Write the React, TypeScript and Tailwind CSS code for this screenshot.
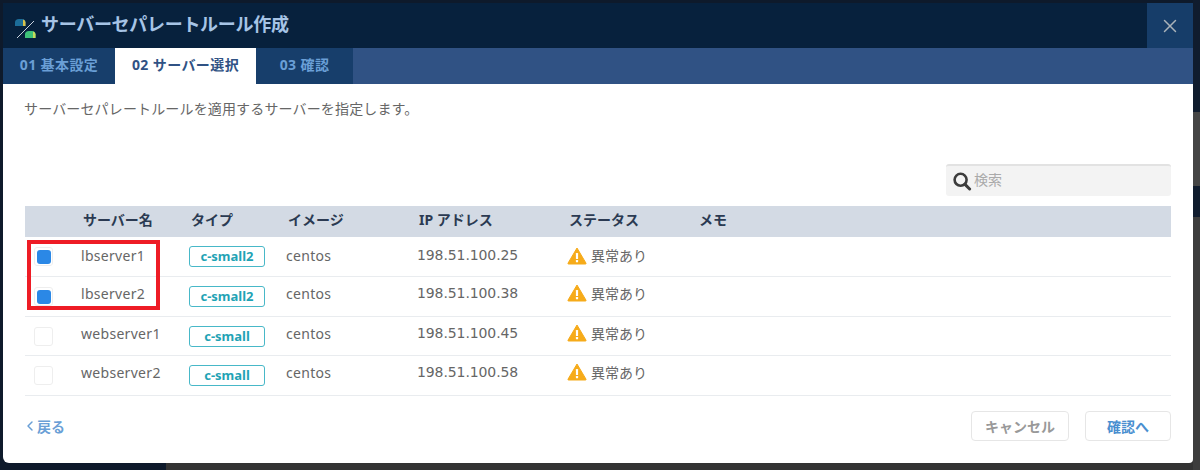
import React from 'react';
import { X, ChevronLeft } from 'lucide-react';

const FONT = 'font-["Noto_Sans","Noto_Sans_CJK_JP",sans-serif]';

interface Server {
  name: string;
  type: string;
  image: string;
  ip: string;
  checked: boolean;
  rowHeight: string;
  textOffset: string;
}

const servers: Server[] = [
  { name: 'lbserver1', type: 'c-small2', image: 'centos', ip: '198.51.100.25', checked: true, rowHeight: 'h-[40px]', textOffset: '-mt-[2px]' },
  { name: 'lbserver2', type: 'c-small2', image: 'centos', ip: '198.51.100.38', checked: true, rowHeight: 'h-[40px]', textOffset: '-mt-[7px]' },
  { name: 'webserver1', type: 'c-small', image: 'centos', ip: '198.51.100.45', checked: false, rowHeight: 'h-[39px]', textOffset: '-mt-[6px]' },
  { name: 'webserver2', type: 'c-small', image: 'centos', ip: '198.51.100.58', checked: false, rowHeight: 'h-[40px]', textOffset: '-mt-[7px]' },
];

const COLS = 'grid grid-cols-[56px_108px_97px_131px_150px_132px_1fr] items-center';

function SeparateIcon() {
  return (
    <svg width="24" height="24" viewBox="0 0 24 24" className="shrink-0">
      <path d="M2 12 V8.5 Q2 5 6 5 H9 Q12.5 5 12.5 8.5 V12 Z" fill="#1c6d99" />
      <path d="M10 5.4 Q12.5 6 12.5 8.5 V12 H10 Z" fill="#d9c24a" />
      <path d="M12 25 V20.5 Q12 17 16 17 H19 Q22.5 17 22.5 20.5 V25 Z" fill="#3fc37a" />
      <path d="M20 17.4 Q22.5 18 22.5 20.5 V25 H20 Z" fill="#c6dc5a" />
      <path d="M3 25 L21 7" stroke="#c9d3de" strokeWidth="1" />
    </svg>
  );
}

function WarnIcon() {
  return (
    <svg width="20" height="18" viewBox="0 0 20 18" className="shrink-0">
      <path d="M10 1 L19 16.2 Q19.4 17 18.4 17 H1.6 Q0.6 17 1 16.2 Z" fill="#f6ab1a" stroke="#f6ab1a" strokeLinejoin="round" />
      <rect x="8.9" y="6" width="2.2" height="6" rx="0.6" fill="#fff" />
      <rect x="8.9" y="13" width="2.2" height="2.2" rx="0.5" fill="#fff" />
    </svg>
  );
}

function SearchIcon() {
  return (
    <svg width="20" height="20" viewBox="0 0 20 20" className="shrink-0">
      <circle cx="8.6" cy="8.8" r="6" fill="none" stroke="#3c3c3c" strokeWidth="2.6" />
      <path d="M13 13.4 L17.6 18" stroke="#3c3c3c" strokeWidth="3" strokeLinecap="round" />
    </svg>
  );
}

function Row({ server }: { server: Server }) {
  return (
    <div className={`${COLS} ${server.rowHeight} border-b border-[#e9ecef] text-[14px] text-[#666666]`}>
      <div className="pl-[9px]">
        <div className="flex h-[19px] w-[19px] items-center justify-center rounded-[3px] border border-[#eeeeee] bg-white">
          {server.checked && <div className="h-[14px] w-[14px] rounded-[3px] bg-[#2b88e6]" />}
        </div>
      </div>
      <div className={`${server.textOffset} tracking-[0.3px]`}>{server.name}</div>
      <div>
        <div className="flex h-[21px] w-[76px] items-center justify-center rounded-[3px] border border-[#48b8c8] text-[13px] font-bold leading-none text-[#1fa3b5]">
          {server.type}
        </div>
      </div>
      <div className={`${server.textOffset} tracking-[0.3px]`}>{server.image}</div>
      <div className={`${server.textOffset} font-["DejaVu_Sans",sans-serif] tracking-[-0.1px]`}>{server.ip}</div>
      <div className={`${server.textOffset} flex items-center gap-[4px]`}>
        <WarnIcon />
        <span>異常あり</span>
      </div>
      <div />
    </div>
  );
}

export default function App() {
  return (
    <div className={`relative h-[470px] w-[1200px] overflow-hidden bg-[#333333] ${FONT}`}>
      {/* 背景の画面 */}
      <div className="absolute left-0 top-0 h-full w-[166px] bg-[#0e1a2b]" />
      <div className="absolute left-0 top-0 h-[3px] w-full bg-[#0e1a2b]" />
      <div className="absolute right-0 top-0 flex h-full w-[7px] flex-col">
        <div className="h-[112px] bg-[#101c2e]" />
        <div className="h-[74px] bg-[#454545]" />
        <div className="h-[31px] bg-[#101c2e]" />
        <div className="flex-1 bg-[#3d3d3d]" />
      </div>

      <div className="relative ml-[3px] mt-[3px] flex h-[460px] w-[1190px] flex-col overflow-hidden rounded-br-[4px] rounded-bl-[6px] bg-white">
        <header className="flex h-[45px] items-center justify-between bg-[#07213d]">
          <div className="flex items-center gap-[4px] pl-[10px]">
            <SeparateIcon />
            <h1 className="-mt-[3px] text-[18px] font-bold leading-none tracking-[-0.3px] text-[#a6c4e6]">サーバーセパレートルール作成</h1>
          </div>
          <div className="flex h-[45px] w-[46px] items-center justify-center bg-[#163d69]">
            <X size={22} strokeWidth={1.6} className="text-[#a9b3ba]" />
          </div>
        </header>

        <nav className="flex h-[36px] bg-[#305284] text-[14px] font-bold tracking-[0.4px]">
          <div className="flex w-[112px] items-center justify-center bg-[#173e6b] pb-[3px] text-[#6a9fd6]">01 基本設定</div>
          <div className="flex w-[141px] items-center justify-center bg-white pb-[3px] text-[#305284]">02 サーバー選択</div>
          <div className="flex w-[97px] items-center justify-center bg-[#173e6b] pb-[3px] text-[#6a9fd6]">03 確認</div>
        </nav>

        <main className="flex flex-1 flex-col px-[22px]">
          <p className="-ml-px mt-[14px] text-[14px] leading-[22px] tracking-[0.15px] text-[#666666]">
            サーバーセパレートルールを適用するサーバーを指定します。
          </p>

          <div className="mt-[44px] flex justify-end">
            <div className="flex h-[32px] w-[225px] items-center gap-[2px] rounded-[3px] border-t-2 border-[#e2e2e2] bg-[#f3f3f3] pl-[6px] text-[14px] text-[#aaaaaa]">
              <SearchIcon />
              <span className="-mt-[4px]">検索</span>
            </div>
          </div>

          <div className="relative mt-[10px]">
            <div className={`${COLS} h-[31px] bg-[#d3dae4] text-[14px] font-bold text-[#2b3a52]`}>
              <div />
              <div className="pl-[2px]">サーバー名</div>
              <div className="pl-[2px]">タイプ</div>
              <div className="pl-[2px]">イメージ</div>
              <div className="pl-[2px]">IP アドレス</div>
              <div className="pl-[2px]">ステータス</div>
              <div>メモ</div>
              <div />
            </div>
            {servers.map((s) => (
              <Row key={s.name} server={s} />
            ))}
            {/* 注釈の赤枠 */}
            <div className="absolute left-[2px] top-[34px] h-[70px] w-[133px] border-[4px] border-[#ee1c25]" />
          </div>

          <footer className="mt-[15px] flex items-center justify-between">
            <div className="flex items-center text-[14px] font-bold text-[#6a9fd6]">
              <ChevronLeft size={16} strokeWidth={2.2} className="-ml-[3px]" />
              <span className="-ml-px">戻る</span>
            </div>
            <div className="flex gap-[16px]">
              <div className="flex h-[30px] w-[98px] items-center justify-center rounded-[4px] border border-[#e6e6e6] bg-white text-[14px] font-bold text-[#999999]">
                キャンセル
              </div>
              <div className="flex h-[30px] w-[86px] items-center justify-center rounded-[4px] border border-[#e6e6e6] bg-white text-[14px] font-bold text-[#4a8fd0]">
                確認へ
              </div>
            </div>
          </footer>
        </main>
      </div>
    </div>
  );
}
